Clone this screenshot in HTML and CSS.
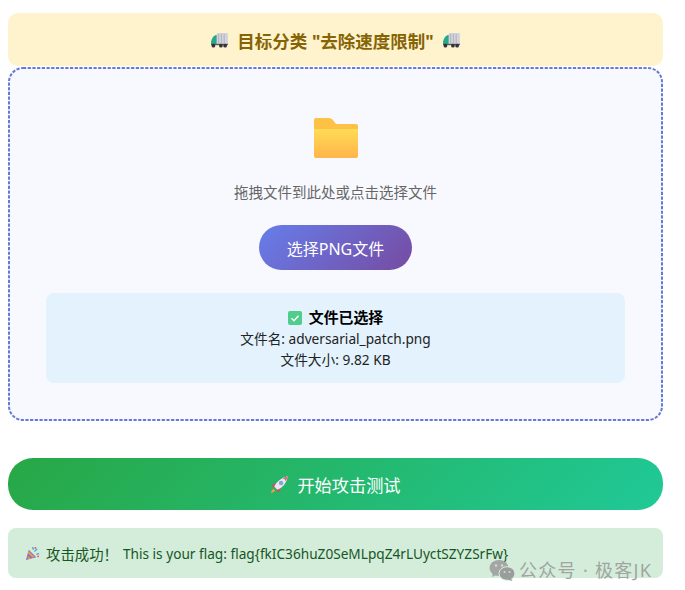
FILE: index.html
```html
<!DOCTYPE html>
<html lang="zh">
<head>
<meta charset="utf-8">
<title>攻击测试</title>
<link rel="stylesheet" href="styles.css">
</head>
<body>
<main class="page">
  <div class="banner">
    <svg class="truck" viewBox="0 0 18 16"><use href="#truck-icon"/></svg>
    <span>目标分类 "去除速度限制"</span>
    <svg class="truck" viewBox="0 0 18 16"><use href="#truck-icon"/></svg>
  </div>
  <section class="drop">
    <svg class="dash"><rect class="dash-line" rx="14" ry="14"/></svg>
    <svg class="folder" viewBox="0 0 44 40">
      <defs>
        <linearGradient id="fg" x1="0" y1="0" x2="0" y2="1"><stop offset="0" stop-color="#ffdb55"/><stop offset="1" stop-color="#ffb54a"/></linearGradient>
      </defs>
      <path d="M2 0h13q2 0 3.500 1.500L22 6h20q2 0 2 2v6H0V2q0-2 2-2z" fill="#fdc245"/>
      <path d="M0 11h44v27q0 2-2 2H2q-2 0-2-2z" fill="url(#fg)"/>
    </svg>
    <p class="hint">拖拽文件到此处或点击选择文件</p>
    <button class="pick">选择PNG文件</button>
    <div class="info">
      <div class="info-title">
        <svg class="check" viewBox="0 0 14 14"><rect width="14" height="14" rx="2" fill="#4fce8b"/><path d="M3.500 7.200l2.500 2.500 4.500-5" fill="none" stroke="#fff" stroke-width="1.400"/></svg>
        <strong>文件已选择</strong>
      </div>
      <div>文件名: adversarial_patch.png</div>
      <div>文件大小: 9.82 KB</div>
    </div>
  </section>
  <button class="start">
    <svg class="rocket" viewBox="0 0 18 18">
      <path d="M3 13q-2 2-2 4 2 0 4-2z" fill="#f5a13a"/>
      <path d="M5.500 7.500L1.500 10l2.500 2.500zM10.500 12.500L8 16.500l-2.500-2.500z" fill="#e5406f"/>
      <path d="M4 11Q7 4 17 1q-2 10-10 13z" fill="#eee6ee"/>
      <path d="M12 3q2.500 1 3 3L17 1z" fill="#ea5f7f"/>
      <circle cx="10.500" cy="7.500" r="2.100" fill="#7ea6d8"/>
    </svg>
    <span>开始攻击测试</span>
  </button>
  <div class="result">
    <svg class="party" viewBox="0 0 16 16">
      <path d="M1 15L4 4l8 8z" fill="#8b6fc4"/>
      <path d="M2.500 10l3.500 3.500-2.500 1zM4 5.500l6 6-2 1-5-5z" fill="#e9a23b"/>
      <path d="M8 1l1 3M13 3l-3 3M15 8l-3 1" stroke="#5aa5e0" stroke-width="1.500"/>
      <circle cx="11" cy="2" r="1" fill="#e8503f"/><circle cx="14" cy="11" r="1" fill="#e8503f"/>
    </svg>
    <span class="cn">攻击成功！</span>
    <span class="flag">This is your flag: flag{fkIC36huZ0SeMLpqZ4rLUyctSZYZSrFw}</span>
  </div>
</main>
<div class="mark">
  <svg class="wechat" viewBox="0 0 26 22">
    <ellipse cx="10" cy="9" rx="9.500" ry="8" fill="#a3a6a4"/>
    <path d="M4 14l-1 4 5-2.500z" fill="#a3a6a4"/>
    <circle cx="7" cy="6.500" r="1.200" fill="#d4dcd6"/><circle cx="13" cy="6.500" r="1.200" fill="#d4dcd6"/>
    <ellipse cx="18" cy="14.500" rx="8" ry="6.800" fill="#9a9e9b" stroke="#e3ece4" stroke-width="1"/>
    <path d="M22 19.500l1.500 2.500-5-1.500z" fill="#9a9e9b"/>
    <circle cx="15.500" cy="13" r="1" fill="#d4dcd6"/><circle cx="20.500" cy="13" r="1" fill="#d4dcd6"/>
  </svg>
  <span>公众号 · 极客JK</span>
</div>
<svg class="defs" width="0" height="0">
  <symbol id="truck-icon" viewBox="0 0 18 16">
    <rect x="6" y="0" width="12" height="12" rx="1" fill="#d4d3dc"/>
    <path d="M8 1v10M11 1v10M14 1v10" stroke="#a9a8b6" stroke-width=".8"/>
    <path d="M5 2Q1 4 0 9v3h6V2z" fill="#26a88b"/>
    <rect y="11.500" width="18" height="1.500" fill="#57565f"/>
    <circle cx="2.500" cy="13.500" r="2" fill="#33323a"/><circle cx="10.500" cy="13.500" r="2" fill="#33323a"/><circle cx="15" cy="13.500" r="2" fill="#33323a"/>
  </symbol>
</svg>
</body>
</html>
```
FILE: styles.css
```css
* { box-sizing: border-box; }
html, body { margin: 0; height: 100%; overflow: hidden; background: #fff; }
body { font-family: "Noto Sans", "Noto Sans CJK SC", sans-serif; position: relative; }
.page { width: 655px; margin-left: 8px; padding-top: 13px; display: flex; flex-direction: column; }
.banner { height: 53px; margin-bottom: 1px; background: #fff3cd; border-radius: 10px; color: #856404; font-size: 17.5px; font-weight: 700; display: flex; align-items: center; justify-content: center; gap: 9px; padding-top: 2px; }
.truck { width: 17px; height: 15px; }
.defs { position: absolute; }
.drop { position: relative; height: 354px; background: #f8f9ff; border-radius: 15px; display: flex; flex-direction: column; align-items: center; padding: 51px 38px 0; }
.dash { position: absolute; inset: 0; width: 100%; height: 100%; }
.dash-line { x: 1px; y: 1px; width: calc(100% - 2px); height: calc(100% - 2px); fill: none; stroke: #6479d8; stroke-width: 2px; stroke-dasharray: 3.2 1.5; }
.folder { width: 44px; height: 40px; display: block; }
.hint { margin: 22px 0 0; font-size: 14.5px; line-height: 24px; color: #666; }
.pick { margin-top: 21px; width: 153px; height: 45px; border: 0; border-radius: 23px; background: linear-gradient(135deg, #667eea, #764ba2); color: #fff; font: 16px "Noto Sans", "Noto Sans CJK SC", sans-serif; padding: 0; }
.info { margin-top: 23px; width: 579px; height: 90px; background: #e3f2fd; border-radius: 8px; color: #222; font-size: 13.7px; line-height: 21px; text-align: center; padding-top: 14px; }
.info-title { display: flex; align-items: center; justify-content: center; gap: 7px; color: #000; font-size: 14.9px; }
.check { width: 14px; height: 14px; }
.start { margin-top: 37px; height: 52px; border: 0; border-radius: 25px; background: linear-gradient(135deg, #28a745, #20c997); color: #fff; font: 17.2px "Noto Sans", "Noto Sans CJK SC", sans-serif; display: flex; align-items: center; justify-content: center; gap: 8px; padding: 0; }
.rocket { width: 19px; height: 19px; }
.result { margin-top: 18px; height: 50px; background: #d4edda; border-radius: 8px; color: #155724; font-size: 13.65px; display: flex; align-items: center; padding-left: 17px; }
.party { width: 15px; height: 15px; margin-right: 6px; }
.cn { margin-right: 5px; font-size: 14.4px; }
.flag { white-space: nowrap; }
.mark { position: absolute; left: 489px; top: 558px; display: flex; align-items: center; gap: 4px; color: #a0a5a1; font-size: 18px; letter-spacing: 1.3px; line-height: 24px; }
.wechat { width: 26px; height: 22px; }
```
